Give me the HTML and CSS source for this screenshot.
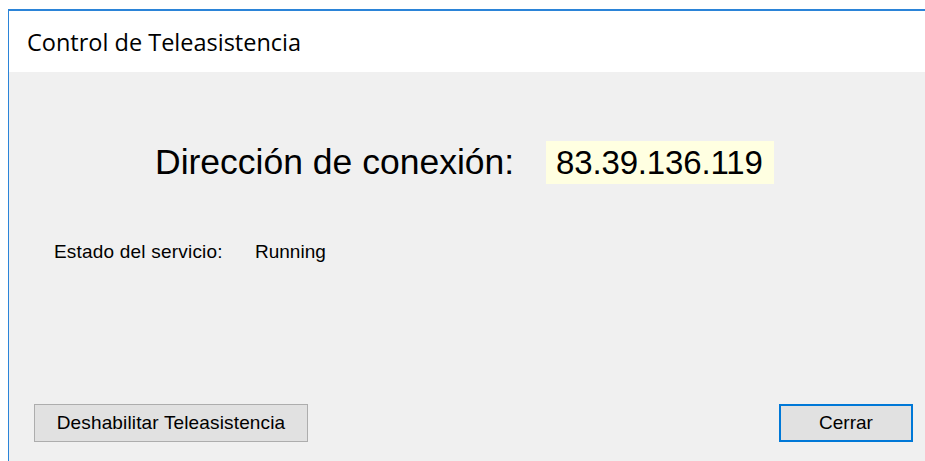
FILE: index.html
```html
<!DOCTYPE html>
<html lang="es">
<head>
<meta charset="utf-8">
<title>Control de Teleasistencia</title>
<link rel="stylesheet" href="styles.css">
</head>
<body>
<div class="window">
  <div class="titlebar">
    <span class="title">Control de Teleasistencia</span>
  </div>
  <div class="client">
    <div class="address-row">
      <span class="address-label">Dirección de conexión:</span>
      <span class="address-value">83.39.136.119</span>
    </div>
    <div class="status-row">
      <span class="status-label">Estado del servicio:</span>
      <span class="status-value">Running</span>
    </div>
    <div class="buttons">
      <button class="btn btn-wide">Deshabilitar Teleasistencia</button>
      <button class="btn btn-default">Cerrar</button>
    </div>
  </div>
</div>
</body>
</html>
```

FILE: styles.css
```css
html, body {
  margin: 0;
  padding: 0;
  background: #ffffff;
  height: 100%;
  overflow: hidden;
}

.window {
  margin: 9px 0 0 8px;
  height: calc(100% - 9px);
  border-top: 2px solid #2b84d8;
  border-left: 1px solid #2b84d8;
  display: flex;
  flex-direction: column;
  box-sizing: border-box;
}

.titlebar {
  height: 61px;
  background: #ffffff;
  display: flex;
  align-items: center;
  padding-left: 18px;
  flex: none;
}

.title {
  font-family: "Open Sans", "Noto Sans", sans-serif;
  font-size: 23.5px;
  color: #000000;
}

.client {
  flex: 1;
  background: #f0f0f0;
  display: flex;
  flex-direction: column;
  font-family: "Liberation Sans", Arial, sans-serif;
  color: #000000;
}

.address-row {
  display: flex;
  align-items: center;
  margin-top: 69px;
  padding-left: 146px;
}

.address-label {
  font-size: 35.5px;
  width: 391px;
  white-space: nowrap;
}

.address-value {
  font-size: 33px;
  background: #ffffe1;
  height: 43px;
  line-height: 43px;
  padding: 0 11px 0 10px;
  letter-spacing: -0.15px;
}

.status-row {
  display: flex;
  margin-top: 57px;
  padding-left: 45px;
  font-size: 19px;
}

.status-label {
  width: 201px;
  letter-spacing: 0.2px;
}

.buttons {
  margin-top: auto;
  margin-bottom: 19px;
  display: flex;
  justify-content: space-between;
  padding: 0 12px 0 25px;
}

.btn {
  font-family: "Liberation Sans", Arial, sans-serif;
  font-size: 19px;
  color: #000000;
  background: #e1e1e1;
  border: 1px solid #adadad;
  height: 38px;
  padding: 0;
  margin: 0;
}

.btn-wide {
  width: 274px;
  letter-spacing: 0.15px;
}

.btn-default {
  width: 134px;
  border: 2px solid #0078d7;
}
```
